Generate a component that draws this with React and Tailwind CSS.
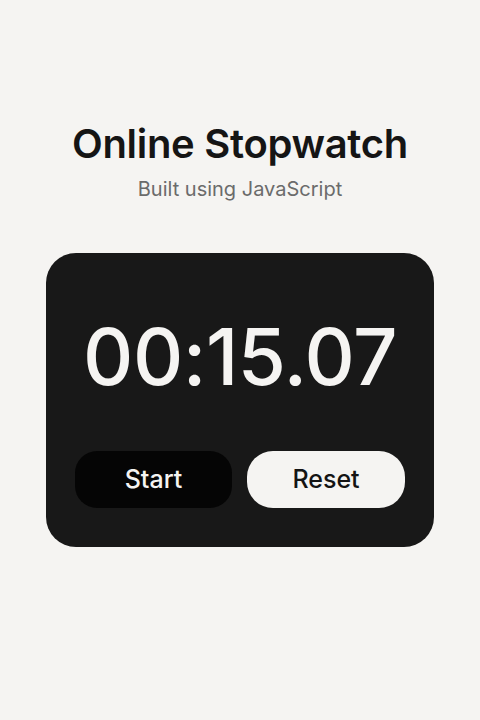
import React, { useState } from "react";

// Stopwatch card
const Stopwatch = () => {
  const [time] = useState("00:15.07");

  return (
    <div className="w-[388px] h-[294px] rounded-[30px] bg-[#181818] px-[29px] flex flex-col">
      <div className="h-[198px] flex items-center justify-center pt-[10px]">
        <span className="text-[78px] leading-none font-medium text-[#f5f4f2] tracking-[-0.5px]">
          {time}
        </span>
      </div>
      <div className="flex gap-[15px]">
        <button className="w-[157px] h-[57px] rounded-[22px] bg-[#050505] text-[#f5f4f2] text-[25px] font-medium">
          Start
        </button>
        <button className="w-[158px] h-[57px] rounded-[26px] bg-[#f5f4f2] text-[#141414] text-[25px] font-medium">
          Reset
        </button>
      </div>
    </div>
  );
};

const App = () => {
  return (
    <div
      className="min-h-screen bg-[#f5f4f2] flex flex-col items-center pt-[121px]"
      style={{ fontFamily: "Inter, 'Noto Sans', sans-serif" }}
    >
      <h1 className="text-[40px] leading-[46px] font-semibold text-[#151515] tracking-[-0.3px]">
        Online Stopwatch
      </h1>
      <p className="mt-[9px] text-[20px] leading-[26px] text-[#6b6b6b]">
        Built using JavaScript
      </p>
      <div className="mt-[51px]">
        <Stopwatch />
      </div>
    </div>
  );
};

export default App;
